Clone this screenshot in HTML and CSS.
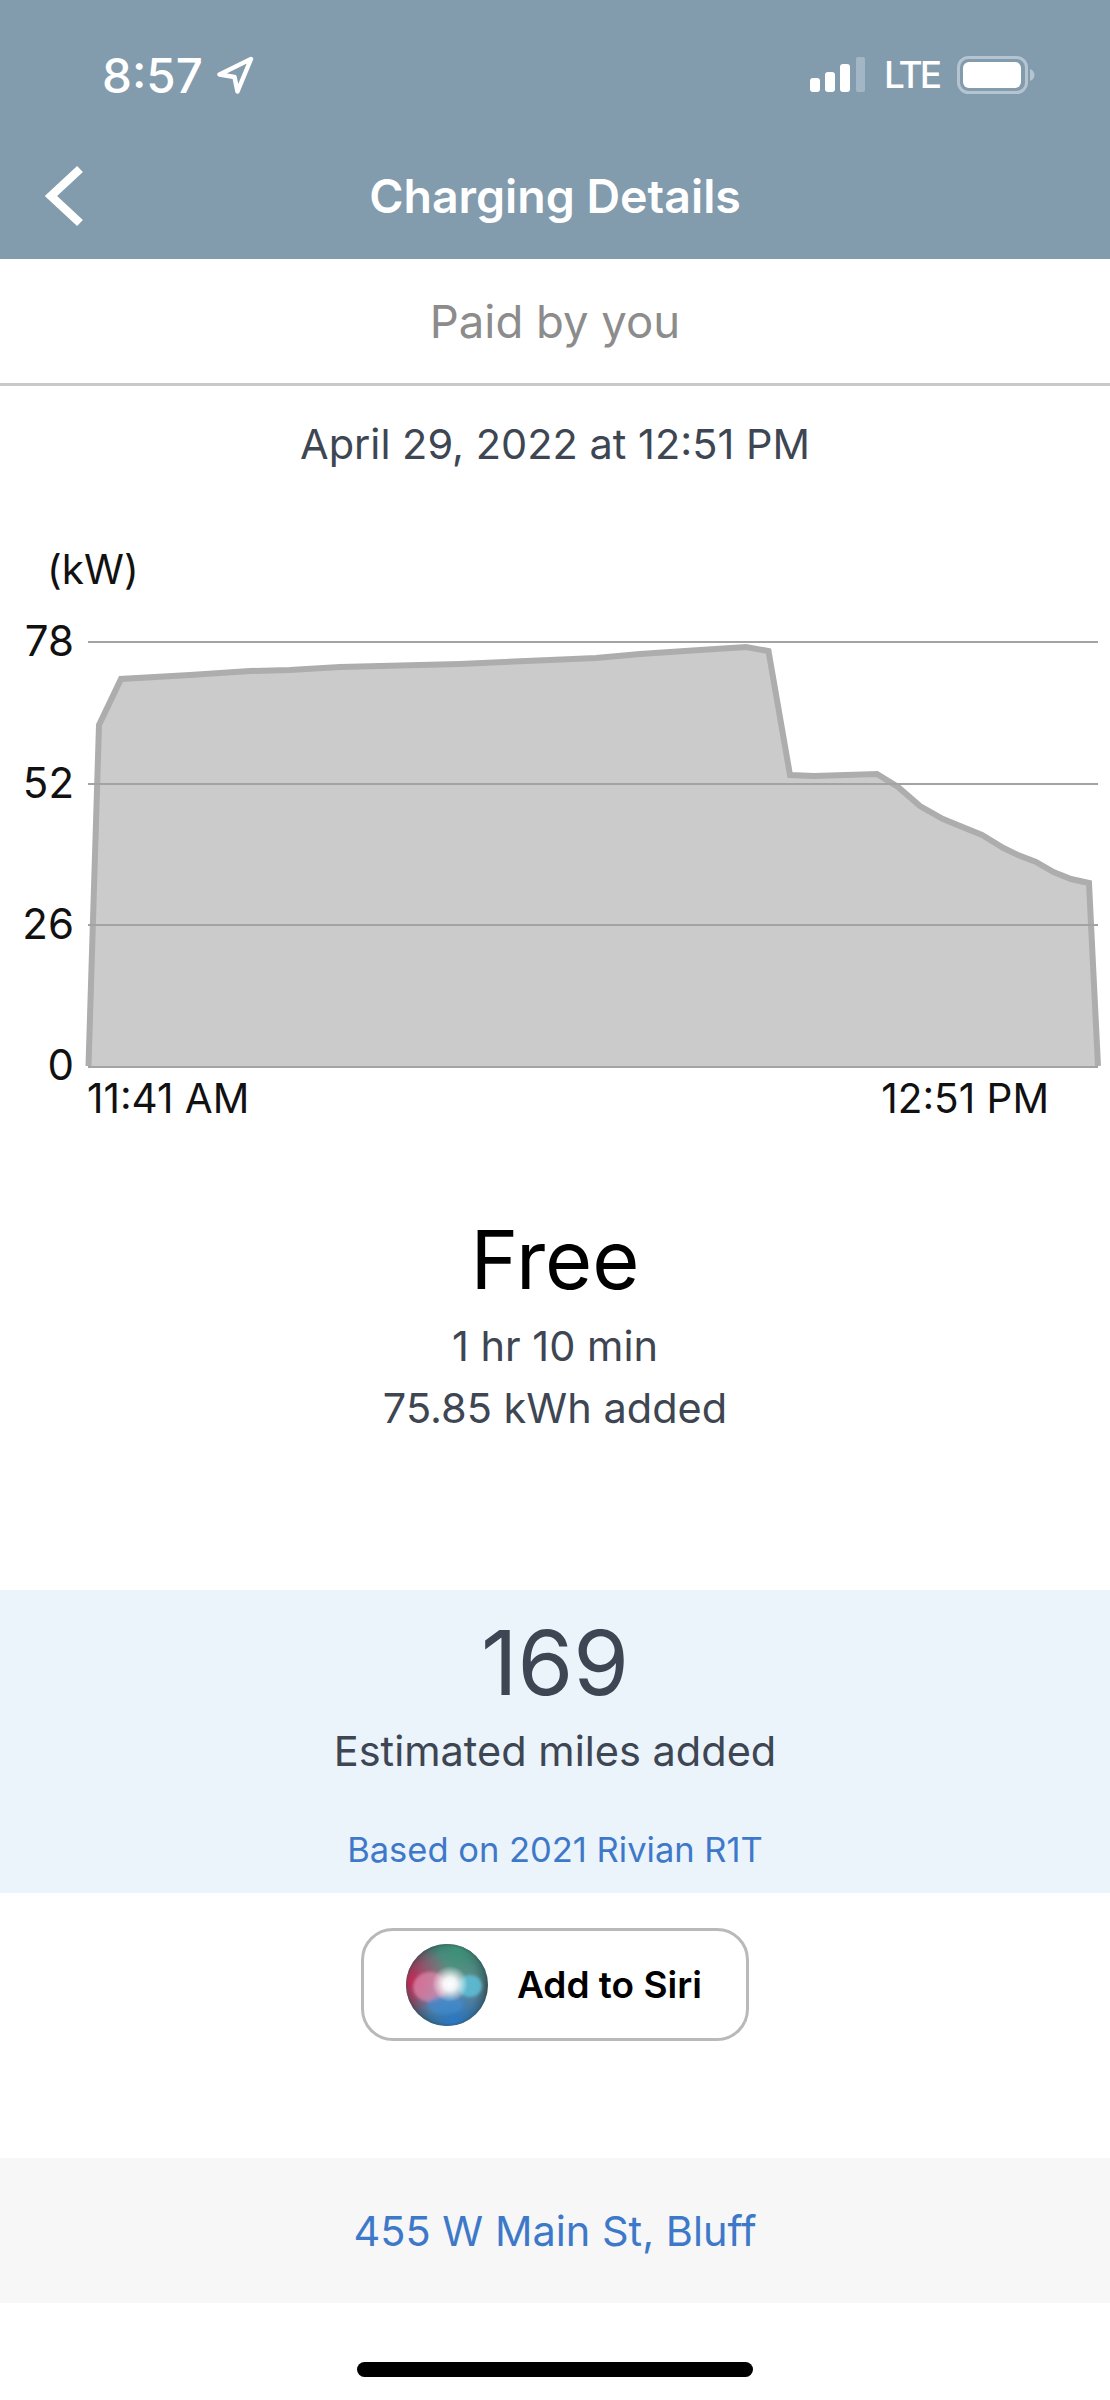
FILE: index.html
```html
<!DOCTYPE html>
<html>
<head>
  <link rel="stylesheet" href="styles.css">
</head>
<body>
<header class="top">
  <div class="status">
    <div class="status-left">
      <span class="clock">8:57</span>
      <svg class="loc" width="38" height="38" viewBox="0 0 38 38"><path d="M35 3 3.500 18.500l15 2.500 3 14.500z" fill="none" stroke="#fff" stroke-width="4.500" stroke-linejoin="round"/></svg>
    </div>
    <div class="status-right">
      <svg width="56" height="36" viewBox="0 0 56 36">
        <rect x="0" y="21" width="10" height="14" rx="3" fill="#fff"/>
        <rect x="15" y="15" width="10" height="20" rx="3" fill="#fff"/>
        <rect x="30" y="7" width="10" height="28" rx="3" fill="#fff"/>
        <rect x="46" y="0" width="9" height="35" rx="2" fill="#a3b6c5"/>
      </svg>
      <span class="lte">LTE</span>
      <svg width="78" height="38" viewBox="0 0 78 38">
        <rect x="1.500" y="1.500" width="68" height="35" rx="10" fill="none" stroke="#b4c4d0" stroke-width="3"/>
        <rect x="6" y="6" width="58" height="26" rx="6" fill="#fff"/>
        <path d="M73 13c3 1 4.500 3.500 4.500 6s-1.500 5-4.500 6z" fill="#b4c4d0"/>
      </svg>
    </div>
  </div>
  <div class="nav">
    <svg class="back" width="44" height="62" viewBox="0 0 44 62"><path d="M37 4 8 31l29 27" fill="none" stroke="#fff" stroke-width="8.500"/></svg>
    <h1>Charging Details</h1>
  </div>
</header>

<div class="paid">Paid by you</div>
<div class="date">April 29, 2022 at 12:51 PM</div>

<svg class="chart" width="1110" height="610" viewBox="0 520 1110 610">
  <path class="area" d="M88.500 1066 99 725 121 679 190 675 250 671 290 670 340 667 460 664 550 660 596 658 640 654 700 650 746 647 768.500 651 790 775 814 776 877 774 898 787 920 806 943 819 982 835 1003.500 848 1018 855 1036 862 1053.500 872 1071 879 1089 883 1098 1066z"/>
  <path class="edge" d="M88.500 1066 99 725 121 679 190 675 250 671 290 670 340 667 460 664 550 660 596 658 640 654 700 650 746 647 768.500 651 790 775 814 776 877 774 898 787 920 806 943 819 982 835 1003.500 848 1018 855 1036 862 1053.500 872 1071 879 1089 883 1098 1066"/>
  <g class="grid">
    <line x1="88" y1="642" x2="1098" y2="642"/>
    <line x1="88" y1="784" x2="1098" y2="784"/>
    <line x1="88" y1="925" x2="1098" y2="925"/>
    <line x1="88" y1="1067" x2="1098" y2="1067"/>
  </g>
  <text x="47" y="584">(kW)</text>
  <g class="ticks">
    <text x="74" y="656">78</text>
    <text x="74" y="798">52</text>
    <text x="74" y="939">26</text>
    <text x="74" y="1080">0</text>
  </g>
  <text x="87" y="1113">11:41 AM</text>
  <text class="end" x="1049" y="1113">12:51 PM</text>
</svg>

<section class="summary">
  <div class="price">Free</div>
  <div class="line">1 hr 10 min</div>
  <div class="line">75.85 kWh added</div>
</section>

<section class="miles">
  <div class="miles-num">169</div>
  <div class="miles-label">Estimated miles added</div>
  <div class="miles-note">Based on 2021 Rivian R1T</div>
</section>

<div class="siri-row">
  <div class="siri">
    <svg width="84" height="84" viewBox="0 0 84 84">
      <defs>
        <radialGradient id="base" cx="0.5" cy="0.5" r="0.5">
          <stop offset="0" stop-color="#9aa6ad"/>
          <stop offset="0.75" stop-color="#5d7f86"/>
          <stop offset="1" stop-color="#33545a"/>
        </radialGradient>
        <radialGradient id="green" cx="0.62" cy="0.08" r="0.55">
          <stop offset="0" stop-color="#3d9277"/>
          <stop offset="1" stop-color="#3d9277" stop-opacity="0"/>
        </radialGradient>
        <radialGradient id="red" cx="0.05" cy="0.45" r="0.5">
          <stop offset="0" stop-color="#c22a55"/>
          <stop offset="1" stop-color="#c22a55" stop-opacity="0"/>
        </radialGradient>
        <radialGradient id="blue" cx="0.58" cy="0.95" r="0.55">
          <stop offset="0" stop-color="#2b78c6"/>
          <stop offset="1" stop-color="#2b78c6" stop-opacity="0"/>
        </radialGradient>
        <radialGradient id="spark">
          <stop offset="0" stop-color="#fff"/>
          <stop offset="0.35" stop-color="#fff" stop-opacity="0.9"/>
          <stop offset="1" stop-color="#fff" stop-opacity="0"/>
        </radialGradient>
        <filter id="soft"><feGaussianBlur stdDeviation="1.500"/></filter>
        <clipPath id="orb"><circle cx="42" cy="42" r="41"/></clipPath>
      </defs>
      <circle cx="42" cy="42" r="41" fill="url(#base)"/>
      <g clip-path="url(#orb)">
        <circle cx="42" cy="42" r="41" fill="url(#green)"/>
        <circle cx="42" cy="42" r="41" fill="url(#red)"/>
        <circle cx="42" cy="42" r="41" fill="url(#blue)"/>
        <g filter="url(#soft)">
          <ellipse cx="25" cy="44" rx="17" ry="15" fill="#e58fb4" opacity="0.65"/>
          <ellipse cx="65" cy="43" rx="12" ry="11" fill="#5cc3dc" opacity="0.8"/>
          <ellipse cx="40" cy="62" rx="18" ry="9" fill="#3f8ed2" opacity="0.6"/>
        </g>
        <circle cx="45" cy="41" r="18" fill="url(#spark)"/>
      </g>
      <circle cx="42" cy="42" r="40" fill="none" stroke="#3a4f5a" stroke-opacity="0.25" stroke-width="2"/>
    </svg>
    <span>Add to Siri</span>
  </div>
</div>

<div class="address">455 W Main St, Bluff</div>

<div class="home-row"><div class="home-bar"></div></div>
</body>
</html>
```

FILE: styles.css
```css
* {
  margin: 0;
  padding: 0;
  box-sizing: border-box;
}
body {
  width: 1110px;
  background: #fff;
  font-family: Inter, "Noto Sans", sans-serif;
  color: #3d4652;
}

/* header */
.top {
  height: 259px;
  background: #829bad;
  color: #fff;
}
.status {
  height: 150px;
  display: flex;
  justify-content: space-between;
  align-items: center;
  padding: 0 75px 0 102px;
}
.status-left {
  display: flex;
  align-items: center;
  gap: 13px;
}
.clock {
  font-size: 47.500px;
  font-weight: 500;
}
.status-right {
  display: flex;
  align-items: center;
  gap: 18px;
}
.lte {
  font-size: 37px;
  font-weight: 500;
  line-height: 38px;
  letter-spacing: -3px;
}
.nav {
  position: relative;
  text-align: center;
}
.nav h1 {
  font-size: 46.500px;
  font-weight: 600;
  line-height: 92px;
}
.back {
  position: absolute;
  left: 43px;
  top: 15px;
}

.paid {
  height: 127px;
  line-height: 126px;
  text-align: center;
  font-size: 45.500px;
  color: #8c8c8c;
  border-bottom: 3px solid #c9c9c9;
}
.date {
  height: 134px;
  padding-top: 28px;
  text-align: center;
  font-size: 41.500px;
  line-height: 60px;
}

/* chart */
.chart {
  display: block;
  font-size: 40.500px;
}
.chart text {
  fill: #111;
}
.area {
  fill: #cbcbcb;
}
.edge {
  fill: none;
  stroke: #adadad;
  stroke-width: 6;
}
.grid line {
  stroke: #a3a3a3;
  stroke-width: 2;
}
.ticks text {
  font-size: 42px;
}
.ticks text, .end {
  text-anchor: end;
}

.summary {
  padding-top: 75px;
  height: 460px;
  text-align: center;
}
.price {
  font-size: 81px;
  color: #000;
  line-height: 110px;
}
.line {
  font-size: 41.500px;
  line-height: 62px;
}

.miles {
  height: 303px;
  background: #ebf3fb;
  text-align: center;
}
.miles-num {
  font-size: 90px;
  line-height: 110px;
  padding-top: 18px;
  height: 128px;
}
.miles-label {
  font-size: 41.500px;
  line-height: 60px;
  margin-top: 3px;
}
.miles-note {
  font-size: 34.500px;
  line-height: 50px;
  margin-top: 44px;
  color: #3e79c9;
}

.siri-row {
  display: flex;
  justify-content: center;
  padding-top: 35px;
  height: 265px;
}
.siri {
  width: 388px;
  height: 113px;
  border: 3px solid #b9b9b9;
  border-radius: 32px;
  display: flex;
  align-items: center;
  gap: 28px;
  padding-left: 41px;
  color: #000;
  font-size: 37px;
  font-weight: 600;
}

.address {
  height: 145px;
  line-height: 146px;
  background: #f7f7f7;
  text-align: center;
  font-size: 41.500px;
  color: #3e79c9;
}
.home-row {
  display: flex;
  justify-content: center;
  padding-top: 59px;
}
.home-bar {
  width: 396px;
  height: 15px;
  border-radius: 8px;
  background: #000;
}
```
